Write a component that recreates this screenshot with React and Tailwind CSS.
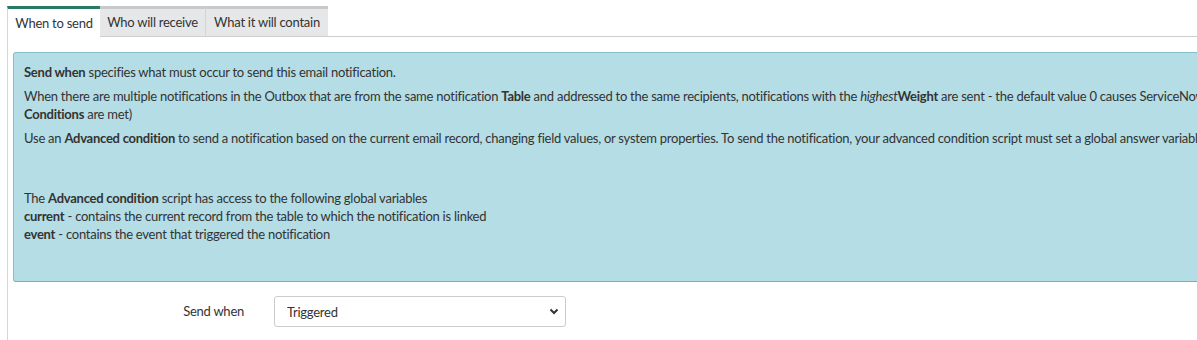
import React from "react";

export default function App() {
  return (
    <div className="w-[1197px] h-[340px] overflow-hidden bg-white font-['Lato','Noto_Sans',sans-serif] text-[13px] tracking-[-0.25px] text-[#333]">
      <div className="pl-[7px] pt-[6px] w-[1500px]">
        {/* Tabs */}
        <div className="flex h-[31px]">
          <div className="w-[93px] flex items-center justify-center border-t-[3px] border-t-[#2b7a68] border-l border-l-[#d6d6d6] bg-white text-[#343434] pt-[1px]">
            When to send
          </div>
          <div className="w-[105px] flex items-center justify-center border-t-[3px] border-t-[#c9c9c9] border-b border-b-[#cfcfcf] bg-[#e6e7e8] text-[#343434] pt-[1px]">
            Who will receive
          </div>
          <div className="w-[123px] flex items-center justify-center border-t-[3px] border-t-[#c9c9c9] border-l border-l-[#d4d4d4] border-b border-b-[#cfcfcf] bg-[#e6e7e8] text-[#343434] pt-[1px]">
            What it will contain
          </div>
          <div className="flex-1 border-b border-b-[#cfcfcf]"></div>
        </div>

        {/* Panel */}
        <div className="border-l border-l-[#d6d6d6] h-[310px] pl-[5px] pt-[15px]">
          <div className="w-[1400px] h-[230px] bg-[#b4dde5] border border-[#86c0c9] border-b-[#6fb2bc] rounded-[3px] pl-[10px] pt-[10px] leading-[18px] whitespace-nowrap">
            <p>
              <b className="font-bold">Send when</b> specifies what must occur to send this email notification.
            </p>
            <p className="mt-[6px]">
              When there are multiple notifications in the Outbox that are from the same notification{" "}
              <b className="font-bold">Table</b> and addressed to the same recipients, notifications with the{" "}
              <i>highest</i>
              <b className="font-bold">Weight</b> are sent - the default value 0 causes ServiceNow to always send the notification (provided the
              <br />
              <b className="font-bold">Conditions</b> are met)
            </p>
            <p className="mt-[6px]">
              Use an <b className="font-bold">Advanced condition</b> to send a notification based on the current email record, changing field values, or system properties. To send the notification, your advanced condition script must set a global answer variable to true.
            </p>
            <p className="mt-[42px]">
              The <b className="font-bold">Advanced condition</b> script has access to the following global variables
              <br />
              <b className="font-bold">current</b> - contains the current record from the table to which the notification is linked
              <br />
              <b className="font-bold">event</b> - contains the event that triggered the notification
            </p>
          </div>

          {/* Form row */}
          <div className="flex items-center mt-[14px]">
            <label className="w-[231px] text-right text-[#333] pt-[1px]">Send when</label>
            <div className="relative ml-[30px] w-[292px] h-[31px]">
              <select
                defaultValue="Triggered"
                className="appearance-none w-full h-full border border-[#cccccc] rounded-[3px] bg-white pl-[12px] pt-[2px] text-[13px] tracking-[-0.25px] text-[#333] font-['Lato','Noto_Sans',sans-serif] outline-none"
              >
                <option>Triggered</option>
                <option>Record inserted or updated</option>
              </select>
              <svg
                className="absolute right-[7px] top-[12px] pointer-events-none"
                width="10"
                height="7"
                viewBox="0 0 10 7"
              >
                <path d="M1.5 1.5 L5 5 L8.5 1.5" fill="none" stroke="#333" strokeWidth="2" />
              </svg>
            </div>
          </div>
        </div>
      </div>
    </div>
  );
}
